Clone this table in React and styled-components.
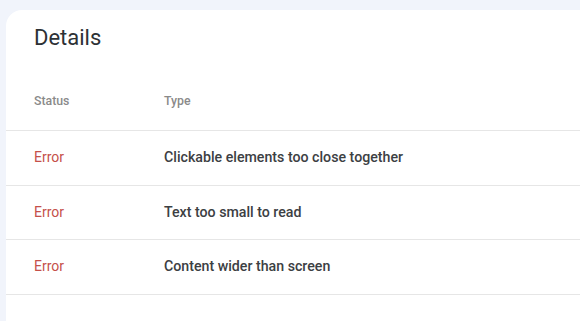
import React from 'react';
import styled, { createGlobalStyle } from 'styled-components';

const GlobalStyle = createGlobalStyle`
  html, body {
    margin: 0;
    padding: 0;
    background: #f1f4fb;
    overflow: hidden;
  }
  body {
    font-family: Roboto, "Liberation Sans", Arial, sans-serif;
  }
`;

const Page = styled.div`
  display: flex;
  flex-direction: column;
  height: 100vh;
  padding: 10px 0 0 6px;
  box-sizing: border-box;
  overflow: hidden;
`;

const Card = styled.section`
  flex: 1;
  background: #fff;
  border-radius: 16px 0 0 0;
  padding-top: 14px;
`;

const Title = styled.h2`
  margin: 0 0 0 28px;
  font-size: 22px;
  line-height: 28px;
  font-weight: 400;
  color: #2d3135;
`;

const Table = styled.div`
  margin-top: 20px;
`;

const Row = styled.div`
  display: grid;
  grid-template-columns: 130px 1fr;
  align-items: center;
  height: ${({ head }) => (head ? '59px' : '54.5px')};
  padding-left: 28px;
  padding-bottom: 1px;
  border-bottom: 1px solid #e6e6e6;
  box-sizing: border-box;
`;

const HeadCell = styled.div`
  font-size: 12.3px;
  font-weight: 500;
  color: #8a8a8a;
`;

const Status = styled.div`
  font-size: 14px;
  color: #c5504a;
`;

const Type = styled.div`
  font-size: 14.2px;
  font-weight: 500;
  color: #3c4043;
`;

const issues = [
  'Clickable elements too close together',
  'Text too small to read',
  'Content wider than screen',
];

export default function App() {
  return (
    <>
      <GlobalStyle />
      <Page>
        <Card>
          <Title>Details</Title>
          <Table>
            <Row head>
              <HeadCell>Status</HeadCell>
              <HeadCell>Type</HeadCell>
            </Row>
            {issues.map((t) => (
              <Row key={t}>
                <Status>Error</Status>
                <Type>{t}</Type>
              </Row>
            ))}
          </Table>
        </Card>
      </Page>
    </>
  );
}
